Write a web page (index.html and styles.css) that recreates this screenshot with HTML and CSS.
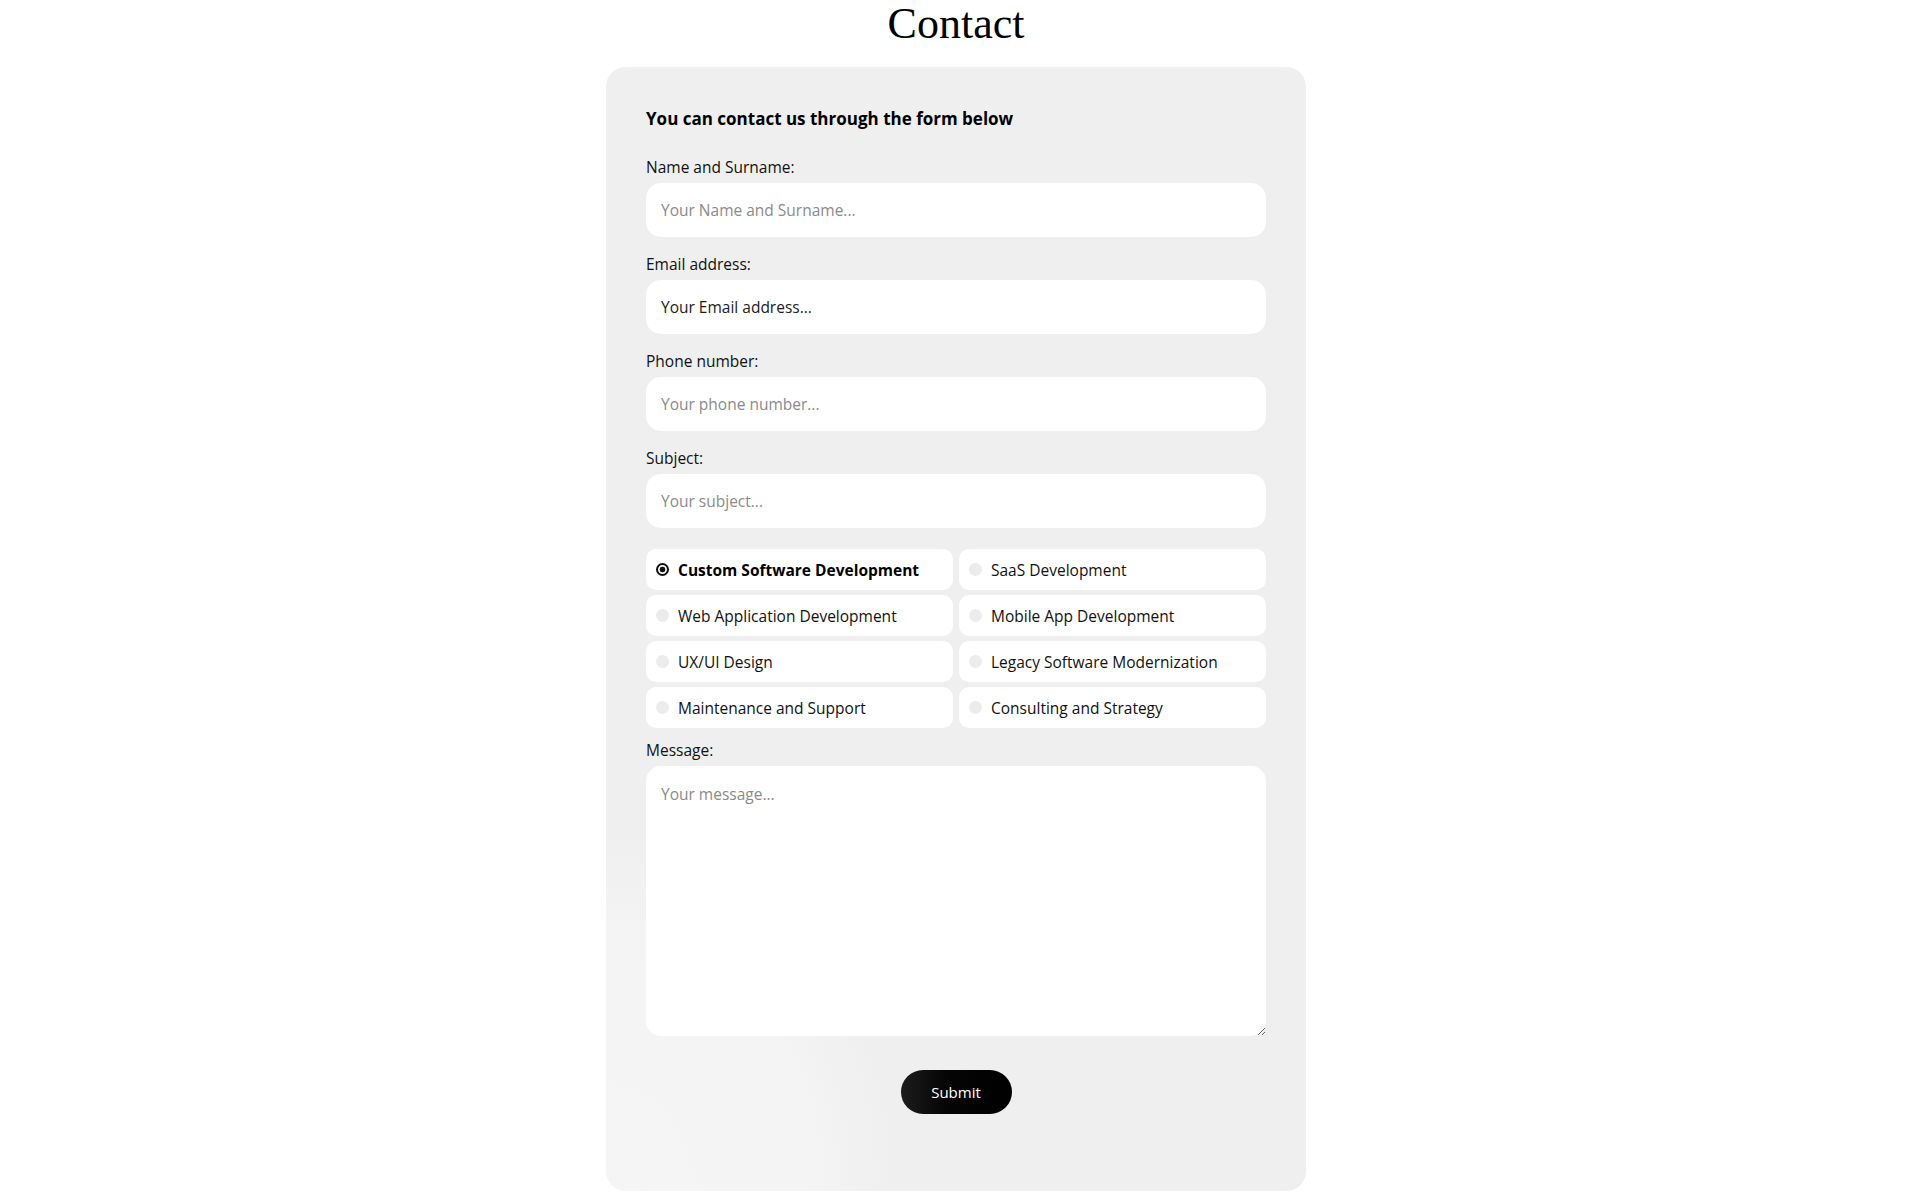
FILE: index.html
```html
<!DOCTYPE html>
<html lang="en">
<head>
    <meta charset="UTF-8">
    <meta name="viewport" content="width=device-width, initial-scale=1.0">
    <title>Contact</title>
    <link rel="stylesheet" href="styles.css">
</head>
<body>
    <h1 class="page-title">Contact</h1>

    <div class="contact-card">
        <h2 class="form-intro">You can contact us through the form below</h2>

        <form class="contact-form" onsubmit="return false;">
            <div class="form-group">
                <label for="fullName">Name and Surname:</label>
                <input type="text" id="fullName" name="fullName" placeholder="Your Name and Surname...">
            </div>

            <div class="form-group">
                <label for="email">Email address:</label>
                <input type="email" id="email" name="email" class="dark-placeholder" placeholder="Your Email address...">
            </div>

            <div class="form-group">
                <label for="phone">Phone number:</label>
                <input type="text" id="phone" name="phone" placeholder="Your phone number...">
            </div>

            <div class="form-group">
                <label for="subject">Subject:</label>
                <input type="text" id="subject" name="subject" placeholder="Your subject...">
            </div>

            <div class="service-grid">
                <label class="service-option">
                    <input type="radio" name="service" value="custom" checked>
                    <span>Custom Software Development</span>
                </label>
                <label class="service-option">
                    <input type="radio" name="service" value="saas">
                    <span>SaaS Development</span>
                </label>
                <label class="service-option">
                    <input type="radio" name="service" value="web">
                    <span>Web Application Development</span>
                </label>
                <label class="service-option">
                    <input type="radio" name="service" value="mobile">
                    <span>Mobile App Development</span>
                </label>
                <label class="service-option">
                    <input type="radio" name="service" value="uxui">
                    <span>UX/UI Design</span>
                </label>
                <label class="service-option">
                    <input type="radio" name="service" value="legacy">
                    <span>Legacy Software Modernization</span>
                </label>
                <label class="service-option">
                    <input type="radio" name="service" value="maintenance">
                    <span>Maintenance and Support</span>
                </label>
                <label class="service-option">
                    <input type="radio" name="service" value="consulting">
                    <span>Consulting and Strategy</span>
                </label>
            </div>

            <div class="form-group">
                <label for="message">Message:</label>
                <textarea id="message" name="message" placeholder="Your message..."></textarea>
            </div>

            <div class="submit-row">
                <button type="submit">Submit</button>
            </div>
        </form>
    </div>
</body>
</html>
```

FILE: styles.css
```css
body {
    margin: 0;
    padding: 0;
    font-family: "Open Sans", "Liberation Sans", sans-serif;
    color: #111;
    background-color: #fff;
}

.page-title {
    margin: 0 0 21px;
    padding-top: 2px;
    font-family: "Liberation Serif", serif;
    font-size: 44px;
    font-weight: normal;
    line-height: 44px;
    text-align: center;
    color: #000;
}

.contact-card {
    box-sizing: border-box;
    width: 700px;
    margin: 0 auto;
    padding: 40px 40px 77px;
    border-radius: 20px;
    background-color: #efefef;
    background-image: radial-gradient(ellipse 290px 360px at 0% 100%, #f5f5f5 0%, #f4f4f4 70%, #efefef 100%);
}

.form-intro {
    margin: 0 0 26px;
    font-size: 17px;
    font-weight: bold;
    line-height: 24px;
    color: #000;
}

.form-group {
    margin-bottom: 17px;
}

.form-group label {
    display: block;
    margin-bottom: 6px;
    font-size: 15.5px;
    line-height: 20px;
    color: #111;
}

.form-group input,
.form-group textarea {
    box-sizing: border-box;
    display: block;
    width: 100%;
    height: 54px;
    padding: 0 15px;
    border: none;
    border-radius: 15px;
    background-color: #fff;
    font-family: inherit;
    font-size: 15.5px;
    color: #111;
    outline: none;
}

.form-group input::placeholder,
.form-group textarea::placeholder {
    color: #8a8a8a;
}

.form-group input.dark-placeholder::placeholder {
    color: #1a1a1a;
}

.form-group textarea {
    height: 270px;
    padding: 17px 15px;
    resize: vertical;
}

.service-grid {
    display: grid;
    grid-template-columns: 1fr 1fr;
    gap: 5px 6px;
    margin: 21px 0 12px;
}

.service-option {
    display: flex;
    align-items: center;
    gap: 9px;
    height: 41px;
    padding-left: 10px;
    border-radius: 10px;
    background-color: #fff;
    font-size: 15.5px;
    color: #111;
    cursor: pointer;
}

.service-option input {
    appearance: none;
    -webkit-appearance: none;
    box-sizing: border-box;
    width: 13px;
    height: 13px;
    margin: 0;
    border-radius: 50%;
    background-color: #ececec;
}

.service-option input:checked {
    border: 2px solid #111;
    background: radial-gradient(circle, #111 0 2.6px, #fff 3.2px);
}

.service-option input:checked + span {
    font-weight: bold;
    font-size: 15.5px;
    color: #000;
}

.submit-row {
    margin-top: 34px;
    text-align: center;
}

.submit-row button {
    height: 44px;
    width: 111px;
    border: none;
    border-radius: 22px;
    background: linear-gradient(90deg, #1c1c1c 0%, #050505 40%, #000 100%);
    font-family: inherit;
    font-size: 15px;
    color: #fff;
    cursor: pointer;
}
```
